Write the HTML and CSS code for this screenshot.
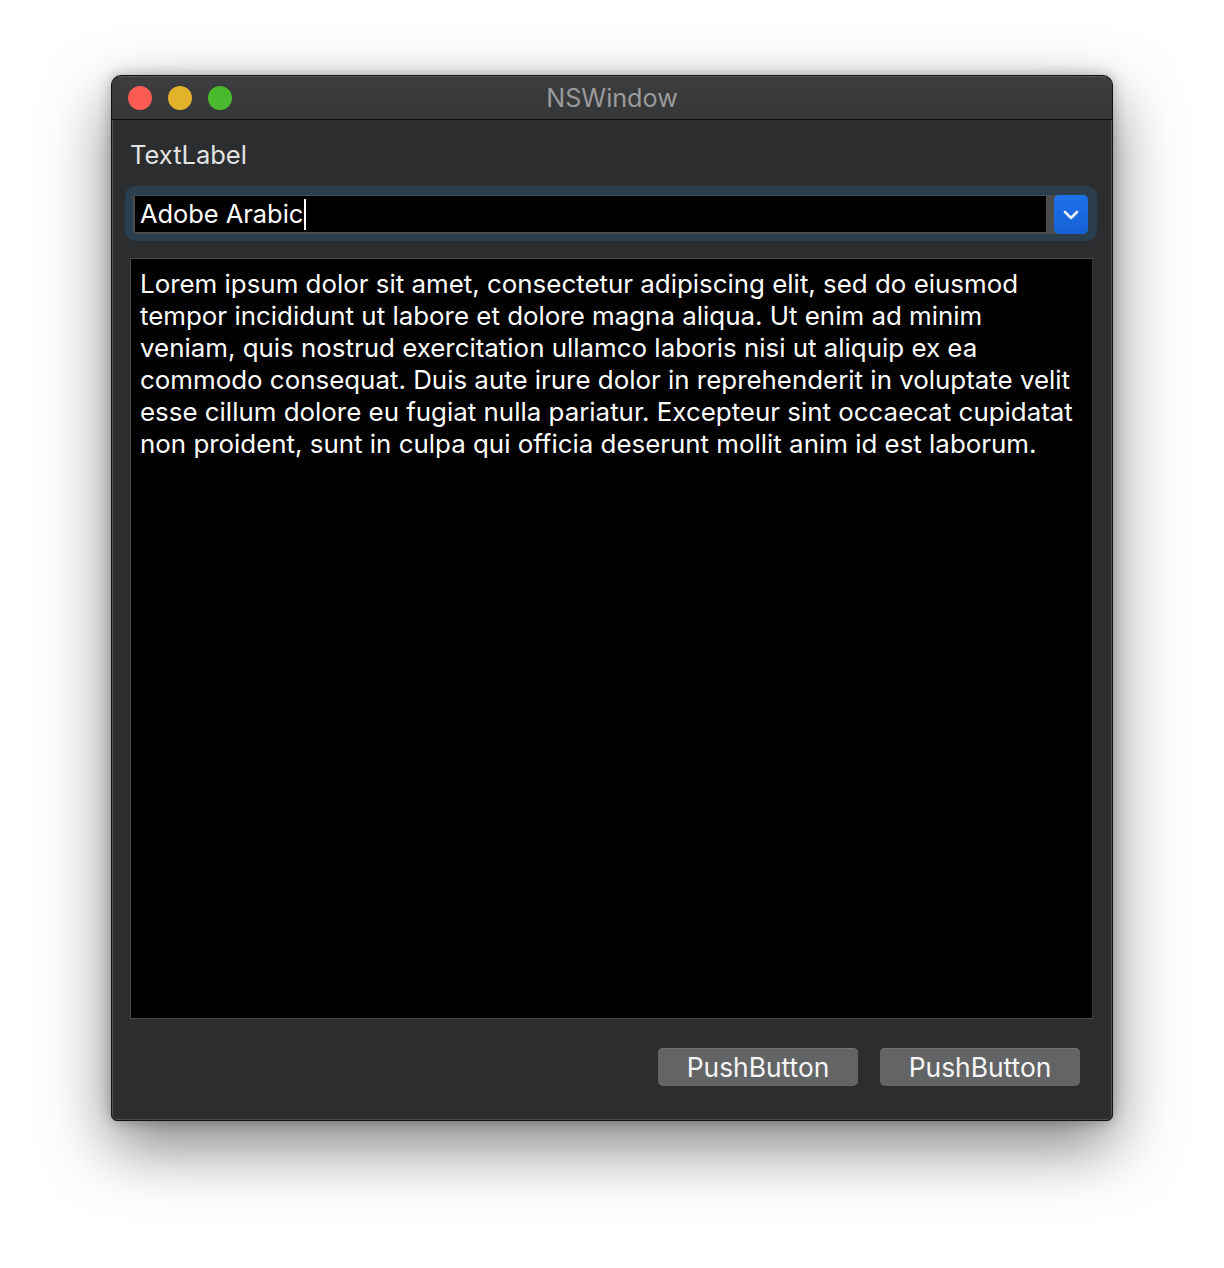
FILE: index.html
```html
<!DOCTYPE html>
<html>
<head>
<meta charset="utf-8">
<link rel="stylesheet" href="styles.css">
</head>
<body>
<div class="window">
  <div class="titlebar">
    <div class="lights">
      <span class="light red"></span>
      <span class="light yellow"></span>
      <span class="light green"></span>
    </div>
    <div class="title">NSWindow</div>
  </div>
  <div class="content">
    <div class="label">TextLabel</div>
    <div class="ring">
      <div class="combo">
        <div class="field"><span class="value">Adobe Arabic</span><span class="caret"></span></div>
        <div class="drop">
          <svg width="16" height="10" viewBox="0 0 16 10"><path d="M2 2 L8 8 L14 2" fill="none" stroke="#e8eefc" stroke-width="2.6" stroke-linecap="round" stroke-linejoin="round"/></svg>
        </div>
      </div>
    </div>
    <div class="textarea">
      <span class="line">Lorem ipsum dolor sit amet, consectetur adipiscing elit, sed do eiusmod</span>
      <span class="line">tempor incididunt ut labore et dolore magna aliqua. Ut enim ad minim</span>
      <span class="line">veniam, quis nostrud exercitation ullamco laboris nisi ut aliquip ex ea</span>
      <span class="line">commodo consequat. Duis aute irure dolor in reprehenderit in voluptate velit</span>
      <span class="line">esse cillum dolore eu fugiat nulla pariatur. Excepteur sint occaecat cupidatat</span>
      <span class="line">non proident, sunt in culpa qui officia deserunt mollit anim id est laborum.</span>
    </div>
    <div class="buttons">
      <button class="btn">PushButton</button>
      <button class="btn">PushButton</button>
    </div>
  </div>
</div>
</body>
</html>
```
FILE: styles.css
```css
html, body {
  margin: 0;
  padding: 0;
  background: #ffffff;
}
body {
  width: 1224px;
  height: 1268px;
  overflow: hidden;
  font-family: Inter, "Noto Sans", sans-serif;
}
.window {
  box-sizing: border-box;
  margin-left: 111px;
  margin-top: 75px;
  width: 1002px;
  height: 1046px;
  background: #2c2d2f;
  border: 1px solid #111;
  border-radius: 10px 10px 6px 6px;
  box-shadow: inset 0 0 0 1px #505153, 0 25px 65px rgba(0,0,0,0.5), 0 0 14px rgba(0,0,0,0.28);
  display: flex;
  flex-direction: column;
  overflow: hidden;
}
.titlebar {
  position: relative;
  height: 43px;
  flex: none;
  background: linear-gradient(#3c3d3f, #353638);
  border-bottom: 1px solid #0c0c0c;
  box-shadow: inset 0 1px 0 #58595b;
  display: flex;
  align-items: center;
  justify-content: center;
}
.lights {
  position: absolute;
  left: 16px;
  top: 10px;
  display: flex;
  gap: 16px;
}
.light {
  width: 24px;
  height: 24px;
  border-radius: 50%;
}
.red { background: #fd5c55; }
.yellow { background: #e2b32a; }
.green { background: #4bb92e; }
.title {
  color: #9a9a9b;
  font-size: 25.2px;
  padding-top: 1px;
}
.content {
  flex: 1;
  display: flex;
  flex-direction: column;
  padding: 19px 32px 0 0;
}
.label {
  margin-left: 18px;
  height: 32px;
  line-height: 32px;
  font-size: 25.5px;
  color: #e2e2e2;
}
.ring {
  margin-top: 15px;
  margin-left: 13px;
  width: 972px;
  height: 55px;
  box-sizing: border-box;
  padding: 9px 9px 7px 8px;
  background: #2a3e4e;
  border-radius: 10px;
}
.combo {
  height: 39px;
  display: flex;
  background: #4a4b4c;
  border-radius: 3px 6px 6px 3px;
}
.field {
  flex: 1;
  margin: 1px 8px 2px 2px;
  background: #000;
  display: flex;
  align-items: center;
  padding-left: 5px;
}
.value {
  color: #fff;
  font-size: 25.4px;
  line-height: 30px;
}
.caret {
  width: 2px;
  height: 31px;
  background: #fff;
  margin-left: 1px;
}
.drop {
  width: 34px;
  background: linear-gradient(#1e72ea, #1760d6);
  border-radius: 5px;
  display: flex;
  align-items: center;
  justify-content: center;
}
.textarea {
  margin-top: 17px;
  margin-left: 18px;
  width: 963px;
  height: 761px;
  box-sizing: border-box;
  background: #000;
  border: 1px solid #4a4b4c;
  border-right-color: #3a3a3b;
  padding: 9px 0 0 9px;
  display: flex;
  flex-direction: column;
}
.line {
  white-space: nowrap;
  color: #fff;
  font-size: 25.9px;
  line-height: 32px;
}
.buttons {
  margin-top: 29px;
  display: flex;
  justify-content: flex-end;
  gap: 22px;
}
.btn {
  width: 200px;
  height: 38px;
  border: none;
  border-radius: 5px;
  background: #636466;
  box-shadow: inset 0 1px 0 #727375;
  color: #f6f6f6;
  font-family: Inter, "Noto Sans", sans-serif;
  font-size: 26.4px;
  padding: 0;
}
```
